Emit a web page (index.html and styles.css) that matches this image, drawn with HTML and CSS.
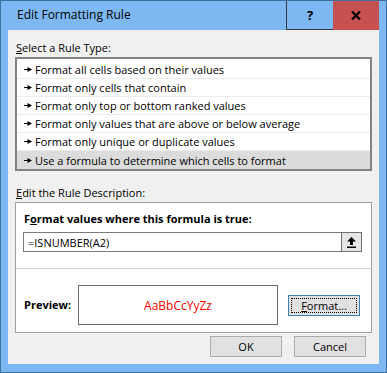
FILE: index.html
```html
<!DOCTYPE html>
<html lang="en">
<head>
<meta charset="utf-8">
<title>Edit Formatting Rule</title>
<link rel="stylesheet" href="styles.css">
</head>
<body>
<div class="window">
  <div class="titlebar">
    <div class="title">Edit Formatting Rule</div>
    <div class="help">?</div>
    <div class="close">
      <svg width="10" height="9" viewBox="0 0 10 9"><path d="M1 0.5 L9 8.5 M9 0.5 L1 8.5" stroke="#000" stroke-width="2.2"/></svg>
    </div>
  </div>

  <div class="client">
    <div class="label"><u>S</u>elect a Rule Type:</div>
    <div class="rulelist">
      <div class="rule"><svg class="arrow" width="8" height="5" viewBox="0 0 8 5"><path d="M0 2.5 H4" stroke="#000" stroke-width="1"/><path d="M3.5 0 L8 2.5 L3.5 5 Z" fill="#000"/></svg>Format all cells based on their values</div>
      <div class="rule"><svg class="arrow" width="8" height="5" viewBox="0 0 8 5"><path d="M0 2.5 H4" stroke="#000" stroke-width="1"/><path d="M3.5 0 L8 2.5 L3.5 5 Z" fill="#000"/></svg>Format only cells that contain</div>
      <div class="rule"><svg class="arrow" width="8" height="5" viewBox="0 0 8 5"><path d="M0 2.5 H4" stroke="#000" stroke-width="1"/><path d="M3.5 0 L8 2.5 L3.5 5 Z" fill="#000"/></svg>Format only top or bottom ranked values</div>
      <div class="rule"><svg class="arrow" width="8" height="5" viewBox="0 0 8 5"><path d="M0 2.5 H4" stroke="#000" stroke-width="1"/><path d="M3.5 0 L8 2.5 L3.5 5 Z" fill="#000"/></svg>Format only values that are above or below average</div>
      <div class="rule"><svg class="arrow" width="8" height="5" viewBox="0 0 8 5"><path d="M0 2.5 H4" stroke="#000" stroke-width="1"/><path d="M3.5 0 L8 2.5 L3.5 5 Z" fill="#000"/></svg>Format only unique or duplicate values</div>
      <div class="rule selected"><svg class="arrow" width="8" height="5" viewBox="0 0 8 5"><path d="M0 2.5 H4" stroke="#000" stroke-width="1"/><path d="M3.5 0 L8 2.5 L3.5 5 Z" fill="#000"/></svg>Use a formula to determine which cells to format</div>
    </div>

    <div class="label label2"><u>E</u>dit the Rule Description:</div>
    <div class="panel">
      <div class="bold">F<u>o</u>rmat values where this formula is true:</div>
      <div class="formula">
        <span class="formula-text">=ISNUMBER(A2)</span>
        <div class="collapse">
          <svg width="9" height="11" viewBox="0 0 9 11"><path d="M4.5 0 L9 4.5 L6 4.5 L6 8 L3 8 L3 4.5 L0 4.5 Z" fill="#000"/><rect x="0" y="9.5" width="9" height="1.5" fill="#000"/></svg>
        </div>
      </div>
      <div class="sep"></div>
      <div class="preview-row">
        <div class="bold preview-label">Preview:</div>
        <div class="preview-box">AaBbCcYyZz</div>
        <div class="btn format"><span class="focus"><u>F</u>ormat...</span></div>
      </div>
    </div>

    <div class="buttons">
      <div class="btn">OK</div>
      <div class="btn">Cancel</div>
    </div>
  </div>
</div>
</body>
</html>
```

FILE: styles.css
```css
*{
box-sizing: border-box;
}

body{
margin: 0;
font-family: "Open Sans", "Noto Sans", sans-serif;
font-size: 11px;
color: #000;
}

.window{
width: 387px;
height: 373px;
background-color: #7db8f2;
border: 1px solid #3f6f9c;
padding: 0 7px 7px 7px;
display: flex;
flex-direction: column;
}

.titlebar{
height: 29px;
display: flex;
margin: 0 -7px;
}

.title{
flex: 1;
padding-left: 16px;
line-height: 27px;
font-size: 12px;
}

.help{
width: 47px;
border-left: 1px solid #3a3a3a;
border-bottom: 1px solid #3a3a3a;
text-align: center;
font-weight: bold;
font-size: 13px;
line-height: 28px;
}

.close{
width: 46px;
margin-right: 7px;
background-color: #c75050;
display: flex;
align-items: center;
justify-content: center;
}

.client{
background-color: #f0f0f0;
height: 334px;
padding: 10px 7px 0 7px;
}

.label{
line-height: 16px;
padding-left: 1px;
}

.label2{
margin-top: 14px;
}

.rulelist{
margin-top: 1px;
background-color: #fff;
border: 2px solid #838383;
padding-top: 2px;
height: 114px;
}

.rule{
height: 18px;
line-height: 17px;
border-bottom: 1px solid #ececec;
display: flex;
align-items: center;
}

.rule:last-child{
border-bottom: none;
}

.rule.selected{
background-color: #dcdcdc;
}

.arrow{
margin: 0 3px 0 7px;
}

.panel{
margin-top: 1px;
background-color: #fff;
border: 1px solid #a0a0a0;
height: 131px;
padding-top: 8px;
}

.bold{
font-weight: bold;
line-height: 16px;
padding-left: 8px;
}

.formula{
margin: 5px 0 0 7px;
width: 339px;
height: 20px;
border: 1px solid #7a7a7a;
display: flex;
align-items: center;
padding-left: 4px;
}

.formula-text{
flex: 1;
}

.collapse{
width: 21px;
height: 20px;
margin-right: -1px;
border: 1px solid #6f6f6f;
background-color: #e6e6e6;
display: flex;
align-items: center;
justify-content: center;
}

.sep{
margin-top: 16px;
height: 1px;
background-color: #d4d4d4;
}

.preview-row{
margin-top: 16px;
display: flex;
align-items: center;
}

.preview-label{
width: 62px;
}

.preview-box{
width: 200px;
height: 40px;
border: 1px solid #6e6e6e;
color: #ff0000;
display: flex;
align-items: center;
justify-content: center;
font-size: 12px;
}

.btn{
width: 72px;
height: 21px;
border: 1px solid #adadad;
background-color: #e1e1e1;
display: flex;
align-items: center;
justify-content: center;
}

.format{
margin-left: 10px;
border-color: #3c7fb1;
padding: 2px;
}

.focus{
width: 100%;
height: 100%;
border: 1px dotted #000;
display: flex;
align-items: center;
justify-content: center;
}

.buttons{
margin-top: 3px;
display: flex;
justify-content: flex-end;
gap: 12px;
padding-right: 6px;
}
```
